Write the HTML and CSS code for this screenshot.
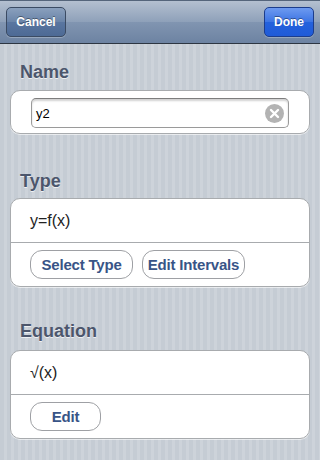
FILE: index.html
```html
<!DOCTYPE html>
<html lang="en">
<head>
    <meta charset="UTF-8">
    <meta name="viewport" content="width=device-width, initial-scale=1.0">
    <title>Edit Function</title>
    <link rel="stylesheet" href="styles.css">
</head>
<body>
    <div class="navbar">
        <button class="nav-btn cancel">Cancel</button>
        <button class="nav-btn done">Done</button>
    </div>

    <div class="content">
        <div class="section-title first">Name</div>
        <div class="group name-group">
            <div class="field">
                <span class="field-text">y2</span>
                <span class="clear">
                    <svg width="19" height="19" viewBox="0 0 19 19">
                        <circle cx="9.5" cy="9.5" r="9.5" fill="#b3b3b3"/>
                        <path d="M6 6 L13 13 M13 6 L6 13" stroke="#fff" stroke-width="2.4" stroke-linecap="round"/>
                    </svg>
                </span>
            </div>
        </div>

        <div class="section-title type-title">Type</div>
        <div class="group">
            <div class="row">y=f(x)</div>
            <div class="row btn-row">
                <button class="cell-btn">Select Type</button>
                <button class="cell-btn">Edit Intervals</button>
            </div>
        </div>

        <div class="section-title eq-title">Equation</div>
        <div class="group">
            <div class="row">√(x)</div>
            <div class="row btn-row">
                <button class="cell-btn wide">Edit</button>
            </div>
        </div>
    </div>
</body>
</html>
```

FILE: styles.css
```css
body {
    margin: 0;
    width: 320px;
    height: 460px;
    overflow: hidden;
    font-family: "Liberation Sans", Arial, sans-serif;
    background: repeating-linear-gradient(90deg, #c5ccd4 0, #c5ccd4 4px, #cdd3da 4px, #cdd3da 7px);
}

.navbar {
    border-top: 1px solid #55657b;
    border-bottom: 1px solid #2d3642;
    box-sizing: border-box;
    height: 44px;
    display: flex;
    justify-content: space-between;
    align-items: center;
    padding: 0 6px;
    background: linear-gradient(#b4c0d0, #8ea0b9 50%, #8195b1 50%, #6d83a2);
}

.nav-btn {
    height: 30px;
    border-radius: 5px;
    font-family: inherit;
    font-size: 12px;
    font-weight: bold;
    color: white;
    text-shadow: 0 -1px 0 rgba(0,0,0,0.4);
    box-shadow: 0 1px 0 rgba(255,255,255,0.25);
    padding: 0;
}

.cancel {
    width: 60px;
    border: 1px solid #3b4b63;
    background: linear-gradient(#8aa0bd, #6a84a8 50%, #5a76a0 50%, #4d6a95);
}

.done {
    width: 50px;
    border: 1px solid #1c3d8c;
    background: linear-gradient(#6d9af0, #3c74e3 50%, #2462dd 50%, #1f5bd8);
}

.content {
    padding: 0 10px;
}

.section-title {
    font-size: 18px;
    font-weight: bold;
    line-height: 22px;
    color: #4c566c;
    text-shadow: 0 1px 0 rgba(255,255,255,0.7);
    padding-left: 10px;
}

.first {
    margin-top: 17px;
    margin-bottom: 7px;
}

.type-title {
    margin-top: 36px;
    margin-bottom: 6px;
}

.eq-title {
    margin-top: 33px;
    margin-bottom: 8px;
}

.group {
    background: white;
    border: 1px solid #a8abae;
    border-radius: 10px;
    box-shadow: 0 1px 0 rgba(255,255,255,0.6);
}

.name-group {
    padding: 7px 20px 5px;
}

.field {
    height: 30px;
    box-sizing: border-box;
    border: 1px solid #9a9a9a;
    border-top-color: #7d7d7d;
    border-radius: 5px;
    box-shadow: inset 0 2px 2px rgba(0,0,0,0.18);
    display: flex;
    align-items: center;
    justify-content: space-between;
    padding: 0 4px;
}

.field-text {
    font-size: 13px;
    color: #000;
}

.clear {
    display: flex;
    margin-top: 1px;
}

.row {
    height: 43px;
    display: flex;
    align-items: center;
    padding-left: 19px;
    font-size: 16px;
    color: #222;
}

.btn-row {
    border-top: 1px solid #a8abae;
    height: 44px;
    align-items: flex-start;
    padding-top: 7px;
    box-sizing: border-box;
    gap: 9px;
}

.cell-btn {
    width: 103px;
    height: 29px;
    padding: 0;
    background: white;
    border: 1px solid #9ea0a4;
    border-radius: 12px;
    font-family: inherit;
    font-size: 15px;
    font-weight: bold;
    letter-spacing: -0.2px;
    color: #385487;
}

.wide {
    width: 71px;
}
```
